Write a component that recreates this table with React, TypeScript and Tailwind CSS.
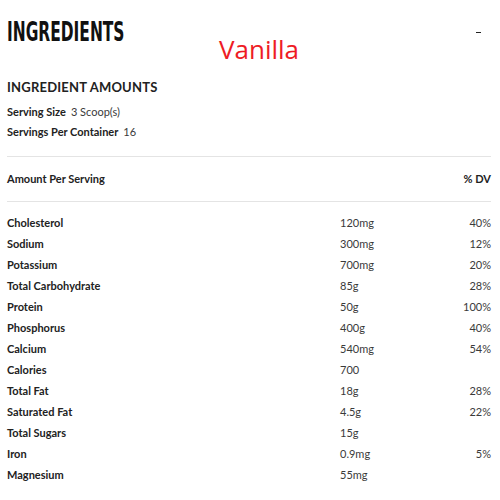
const rows: [string, string, string][] = [
  ['Cholesterol', '120mg', '40%'],
  ['Sodium', '300mg', '12%'],
  ['Potassium', '700mg', '20%'],
  ['Total Carbohydrate', '85g', '28%'],
  ['Protein', '50g', '100%'],
  ['Phosphorus', '400g', '40%'],
  ['Calcium', '540mg', '54%'],
  ['Calories', '700', ''],
  ['Total Fat', '18g', '28%'],
  ['Saturated Fat', '4.5g', '22%'],
  ['Total Sugars', '15g', ''],
  ['Iron', '0.9mg', '5%'],
  ['Magnesium', '55mg', ''],
];

export default function App() {
  return (
    <div className="w-[500px] h-[500px] bg-white overflow-hidden text-[#222] font-['Lato','Liberation_Sans',sans-serif]">
      <div className="relative h-[70px]">
        <h1 className="absolute left-[7px] top-[17px] text-[26px] leading-[30px] font-bold text-[#111] font-['DejaVu_Sans_Condensed','Liberation_Sans',sans-serif] scale-x-[0.66] origin-left whitespace-nowrap">
          INGREDIENTS
        </h1>
        <span className="absolute left-[219px] top-[33px] text-[26px] leading-[32px] text-[#ee1c25] font-['Open_Sans','Liberation_Sans',sans-serif]">
          Vanilla
        </span>
        <span className="absolute left-[476px] top-[32px] w-[5px] h-[1px] bg-[#222]" />
      </div>

      <div className="px-[7px] w-[498px]">
        <h2 className="mt-[8px] text-[13px] leading-[18px] font-bold tracking-[0.2px] text-[#222]">INGREDIENT AMOUNTS</h2>
        <div className="mt-[6px] text-[11px] leading-[20px]">
          <div>
            <span className="font-bold">Serving Size</span>
            <span className="ml-[5px] text-[#3a3a3a]">3 Scoop(s)</span>
          </div>
          <div>
            <span className="font-bold">Servings Per Container</span>
            <span className="ml-[5px] text-[#3a3a3a]">16</span>
          </div>
        </div>

        <div className="mt-[14px] border-t border-[#e4e4e4]" />
        <div className="flex justify-between items-center h-[44px] text-[11px] font-bold">
          <span>Amount Per Serving</span>
          <span>% DV</span>
        </div>
        <div className="border-t border-[#e4e4e4]" />

        <div className="mt-[11px] text-[11px]">
          {rows.map(([name, amt, dv]) => (
            <div key={name} className="flex items-center h-[21px]">
              <span className="w-[333px] font-bold">{name}</span>
              <span className="flex-1 text-[#3a3a3a]">{amt}</span>
              <span className="text-[#3a3a3a] text-right">{dv}</span>
            </div>
          ))}
        </div>
      </div>
    </div>
  );
}
